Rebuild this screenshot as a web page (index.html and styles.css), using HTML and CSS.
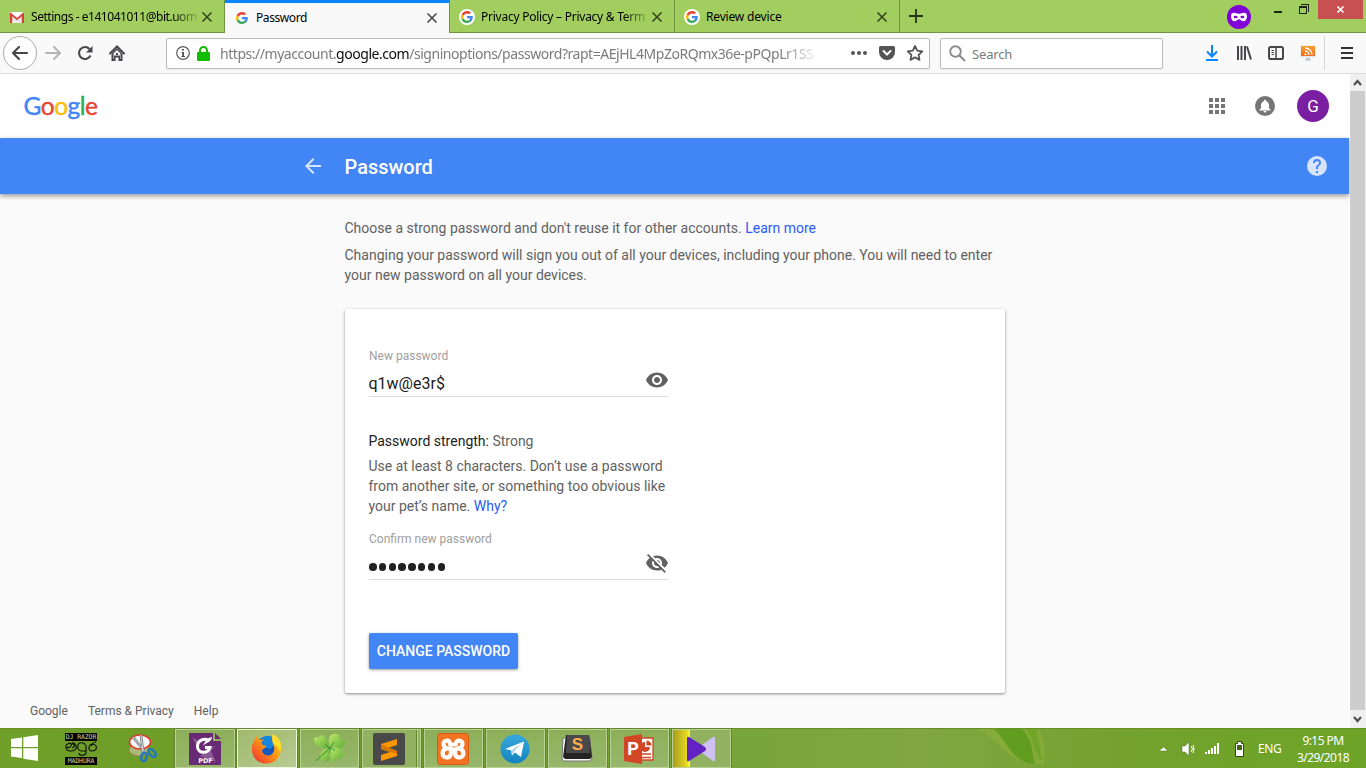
FILE: index.html
```html
<!DOCTYPE html>
<html lang="en">
<head>
<meta charset="utf-8">
<title>Password</title>
<link rel="stylesheet" href="styles.css">
</head>
<body>
<svg width="0" height="0" class="defs">
  <defs>
    <symbol id="g" viewBox="0 0 48 48">
      <path fill="#ea4335" d="M24 9.500c3.500 0 6.700 1.200 9.200 3.600l6.900-6.900C35.900 2.400 30.500 0 24 0 14.600 0 6.500 5.400 2.600 13.200l8 6.200C12.400 13.700 17.700 9.500 24 9.500z"/>
      <path fill="#4285f4" d="M47 24.500c0-1.600-.2-3.100-.4-4.500H24v9h12.900c-.6 3-2.300 5.500-4.800 7.200l7.700 6C44.400 38 47 31.800 47 24.500z"/>
      <path fill="#fbbc05" d="M10.500 28.600a14.400 14.400 0 0 1 0-9.200l-8-6.200a24 24 0 0 0 0 21.600l8-6.200z"/>
      <path fill="#34a853" d="M24 48c6.500 0 11.900-2.100 15.900-5.800l-7.700-6c-2.200 1.400-4.900 2.300-8.200 2.300-6.300 0-11.600-4.200-13.500-9.900l-8 6.200C6.500 42.600 14.600 48 24 48z"/>
    </symbol>
    <symbol id="x" viewBox="0 0 12 12"><path d="M1.500 1.500l9 9M10.500 1.500l-9 9" stroke="currentColor" stroke-width="1.500" fill="none"/></symbol>
    <linearGradient id="or" x2="0" y2="1"><stop stop-color="#f5a02c"/><stop offset="1" stop-color="#f36c1c"/></linearGradient>
    <linearGradient id="ff" x1="1" x2="0" y2="1"><stop stop-color="#ffd827"/><stop offset=".45" stop-color="#ff9a12"/><stop offset="1" stop-color="#ed2638"/></linearGradient>
    <linearGradient id="leaf" x2="1" y2="1"><stop stop-color="#c0e86c"/><stop offset="1" stop-color="#5cad36"/></linearGradient>
    <linearGradient id="tg" x2="0" y2="1"><stop stop-color="#35a9de"/><stop offset="1" stop-color="#1583bd"/></linearGradient>
  </defs>
</svg>

<header class="tabs">
  <div class="tab">
    <svg class="fav" viewBox="0 0 16 16"><path d="M1 3h14v11H1z" fill="#e9e9e9"/><path d="M2.500 3L8 8l5.500-5z" fill="#fff"/><path d="M1 14V3.200L8 9l7-5.800V14h-2.200V7.300L8 11.300 3.200 7.300V14z" fill="#d93f35"/></svg>
    <span class="tab-title t1">Settings - e141041011@bit.uom</span>
    <svg class="close"><use href="#x"/></svg>
  </div>
  <div class="tab active">
    <span class="fav"><svg><use href="#g"/></svg></span>
    <span class="tab-title t2">Password</span>
    <svg class="close"><use href="#x"/></svg>
  </div>
  <div class="tab">
    <span class="fav round"><svg><use href="#g"/></svg></span>
    <span class="tab-title t3">Privacy Policy – Privacy &amp; Term</span>
    <svg class="close"><use href="#x"/></svg>
  </div>
  <div class="tab">
    <span class="fav round"><svg><use href="#g"/></svg></span>
    <span class="tab-title t4">Review device</span>
    <svg class="close"><use href="#x"/></svg>
  </div>
  <svg class="plus" viewBox="0 0 14 14"><path d="M7 0v14M0 7h14" stroke="#263016" stroke-width="1.800"/></svg>
  <svg class="mask" viewBox="0 0 24 24"><circle cx="12" cy="12" r="12" fill="#8000d7"/><path fill="#fff" d="M4 11c0-3 2-3.400 4-3.100 2 .2 3 .9 4 .9s2-.7 4-.9c2-.3 4 .1 4 3.100 0 3.400-1.500 5.300-3.600 5.300-2 0-2.900-2-4.400-2s-2.400 2-4.400 2C5.500 16.300 4 14.400 4 11z"/><ellipse cx="8.600" cy="12" rx="2" ry="1.200" fill="#8000d7"/><ellipse cx="15.400" cy="12" rx="2" ry="1.200" fill="#8000d7"/></svg>
  <div class="window">
    <svg width="90" height="19" viewBox="0 0 90 19" shape-rendering="crispEdges"><path d="M1 11h8v2H1z" fill="#1c2511"/><path d="M26.500 6.500h7v7h-7zM28 4.500h7.500V12" fill="none" stroke="#1c2511"/><path d="M26 6h8v2h-8z" fill="#1c2511"/><path d="M45 0h45v19H45z" fill="#c75050"/><path d="M64.500 6.500l6 6M70.500 6.500l-6 6" stroke="#fff" stroke-width="1.700" shape-rendering="auto"/></svg>
  </div>
</header>

<nav class="toolbar">
  <span class="back"><svg width="18" height="16" viewBox="0 0 18 16" fill="none" stroke="#47474a" stroke-width="2.200" stroke-linecap="round" stroke-linejoin="round"><path d="M8 2L2 8l6 6M2 8h14"/></svg></span>
  <span class="tool"><svg width="18" height="16" viewBox="0 0 18 16" fill="none" stroke="#b4b4b4" stroke-width="2" stroke-linecap="round" stroke-linejoin="round"><path d="M10 2l6 6-6 6M16 8H2"/></svg></span>
  <span class="tool"><svg width="16" height="16" viewBox="0 0 16 16"><path d="M13.500 10.500A6 6 0 1 1 12.500 4" fill="none" stroke="#47474a" stroke-width="2.100"/><path d="M15.500 1v6.500H9z" fill="#47474a"/></svg></span>
  <span class="tool"><svg width="16" height="16" viewBox="0 0 16 16"><path d="M1 8.500l7-7 7 7" fill="none" stroke="#47474a" stroke-width="2" stroke-linecap="round"/><path fill="#47474a" fill-rule="evenodd" d="M2.500 8.500L8 3l5.500 5.500V16H9.500v-3.500h-3V16h-4zM4.500 8.500V14H5v-3.500h6V14h.5V8.500L8 5z"/><path d="M7 8h2v2H7z" fill="#47474a"/></svg></span>
  <div class="url">
    <svg width="14" height="14" viewBox="0 0 14 14"><circle cx="7" cy="7" r="6.300" fill="none" stroke="#5c5c5c" stroke-width="1.200"/><path d="M6 3h2v1.600H6zM5.500 6H8v4h1v1H5.500v-1h.8V7h-.8z" fill="#4c4c4c"/></svg>
    <svg class="lock" width="13" height="15" viewBox="0 0 13 15"><path d="M3 7V4.500a3.500 3.500 0 0 1 7 0V7" fill="none" stroke="#12bc00" stroke-width="2"/><rect y="6" width="13" height="9" rx="1.300" fill="#12bc00"/></svg>
    <span class="address">https://myaccount.<b>google.com</b>/signinoptions/password?rapt=AEjHL4MpZoRQmx36e-pPQpLr1SS</span>
    <svg class="url-icons" width="74" height="18" viewBox="0 0 74 18"><g fill="#555"><circle cx="3" cy="9" r="2"/><circle cx="9" cy="9" r="2"/><circle cx="15" cy="9" r="2"/><path d="M30.500 2h13q1.500 0 1.500 1.500V8a8 8 0 0 1-16 0V3.500Q29 2 30.500 2z"/></g><path d="M33.500 7l3.500 3.500L40.500 7" fill="none" stroke="#fff" stroke-width="2" stroke-linecap="round"/><path d="M65 2l2.200 4.600 5.100.7-3.700 3.500.9 5.100-4.500-2.500-4.500 2.500.9-5.100-3.700-3.500 5.100-.7z" fill="none" stroke="#555" stroke-width="1.800" stroke-linejoin="round"/></svg>
  </div>
  <div class="search"><svg width="17" height="17" viewBox="0 0 17 17" fill="none" stroke="#8a8a8a" stroke-width="1.900"><circle cx="6.500" cy="6.500" r="5.300"/><path d="M10.500 10.500l5.500 5.500"/></svg><span>Search</span></div>
  <div class="actions">
    <span><svg width="14" height="16" viewBox="0 0 14 16" fill="none" stroke="#0a84ff" stroke-width="2"><path d="M7 0v11M2 6.500L7 11.500l5-5M1 15h12"/></svg></span>
    <span><svg width="16" height="14" viewBox="0 0 16 14" fill="none" stroke="#47474a" stroke-width="2"><path d="M2 0v14M5.500 0v14M9 0v14M11 .5l4 13"/></svg></span>
    <span><svg width="16" height="14" viewBox="0 0 16 14" fill="none" stroke="#47474a" stroke-width="2"><rect x="1" y="1" width="14" height="12" rx="1.800"/><path d="M8 1v12" stroke-width="1.500"/><path d="M3.500 4.500H6M3.500 6.500H6M3.500 8.500H6" stroke-width="1"/></svg></span>
    <span><svg width="16" height="16" viewBox="0 0 16 16"><rect x=".5" y=".5" width="15" height="12" rx="1" fill="#e5e5e5"/><path d="M1 1h14v10H1z" fill="url(#or)"/><g fill="none" stroke="#fff" stroke-width="1.300"><path d="M5 6a4 4 0 0 1 4 4M5 3a7 7 0 0 1 7 7"/></g><circle cx="5.500" cy="9.200" r="1" fill="#fff"/><path d="M6 13h4l1 2.500H5z" fill="#bfc6cc"/></svg></span>
  </div>
  <span class="menu"><svg width="12" height="12" viewBox="0 0 12 12" stroke="#333" stroke-width="2"><path d="M0 1h12M0 6h12M0 11h12"/></svg></span>
</nav>

<main class="viewport">
  <section class="page">
    <div class="masthead">
      <div class="logo"><span class="c-b">G</span><span class="c-r">o</span><span class="c-y">o</span><span class="c-b">g</span><span class="c-g">l</span><span class="c-r">e</span></div>
      <svg class="apps" width="16" height="16" viewBox="0 0 16 16" fill="#757575"><path d="M0 0h4v4H0zM6 0h4v4H6zM12 0h4v4h-4zM0 6h4v4H0zM6 6h4v4H6zM12 6h4v4h-4zM0 12h4v4H0zM6 12h4v4H6zM12 12h4v4h-4z"/></svg>
      <svg class="bell" width="20" height="20" viewBox="0 0 20 20"><circle cx="10" cy="10" r="10" fill="#757575"/><path fill="#fff" d="M10 3.700c.7 0 1.100.5 1.100 1.100v.4c1.900.5 2.900 2.100 2.900 4v3l1.500 1.400v.8h-11v-.8L6 12.200v-3c0-1.900 1-3.500 2.900-4v-.4c0-.6.400-1.100 1.100-1.100zM8.600 15h2.800c0 .9-.6 1.500-1.400 1.500S8.600 15.900 8.600 15z"/></svg>
      <span class="avatar">G</span>
    </div>
    <div class="titlebar">
      <svg class="arrow" width="16" height="16" viewBox="0 0 16 16"><path d="M16 7H3.800l5.600-5.600L8 0 0 8l8 8 1.400-1.400L3.800 9H16z" fill="#d7e5fd"/></svg>
      <h1>Password</h1>
      <svg class="help" width="20" height="20" viewBox="0 0 20 20"><circle cx="10" cy="10" r="10" fill="#d6e4fd"/><path d="M9 15h2v2H9zM10 3a4 4 0 0 0-4 4h2a2 2 0 1 1 4 0c0 2-3 1.800-3 5v1h2v-1c0-2.200 3-2.500 3-5a4 4 0 0 0-4-4z" fill="#4285f4"/></svg>
    </div>
    <div class="intro">
      <p>Choose a strong password and don't reuse it for other accounts. <a>Learn more</a></p>
      <p>Changing your password will sign you out of all your devices, including your phone. You will need to enter<br>your new password on all your devices.</p>
    </div>
    <div class="card">
      <div class="label">New password</div>
      <div class="field"><span>q1w@e3r$</span><svg width="24" height="24" viewBox="0 0 24 24" fill="#616161"><path d="M12 4.500C7 4.500 2.730 7.610 1 12c1.730 4.390 6 7.500 11 7.500s9.270-3.110 11-7.500c-1.730-4.390-6-7.500-11-7.500zM12 17c-2.760 0-5-2.240-5-5s2.240-5 5-5 5 2.240 5 5-2.240 5-5 5zm0-8c-1.660 0-3 1.340-3 3s1.340 3 3 3 3-1.340 3-3-1.340-3-3-3z"/></svg></div>
      <div class="strength">Password strength: <span>Strong</span></div>
      <p class="tip">Use at least 8 characters. Don’t use a password<br>from another site, or something too obvious like<br>your pet’s name. <a>Why?</a></p>
      <div class="label">Confirm new password</div>
      <div class="field"><span class="dots"><i></i><i></i><i></i><i></i><i></i><i></i><i></i><i></i></span><svg width="24" height="24" viewBox="0 0 24 24" fill="#616161"><path d="M12 7c2.760 0 5 2.240 5 5 0 .65-.13 1.260-.36 1.830l2.920 2.920c1.510-1.260 2.700-2.890 3.430-4.750-1.730-4.390-6-7.500-11-7.500-1.400 0-2.740.25-3.980.7l2.160 2.160C10.740 7.130 11.350 7 12 7zM2 4.270l2.740 2.740C3.080 8.300 1.780 10.020 1 12c1.730 4.390 6 7.500 11 7.500 1.550 0 3.030-.3 4.380-.84L19.730 22 21 20.730 3.270 3 2 4.270zM7.530 9.800l1.550 1.550c-.05.21-.08.430-.08.650 0 1.660 1.340 3 3 3 .22 0 .44-.03.65-.08l1.550 1.550c-.67.33-1.410.53-2.200.53-2.760 0-5-2.240-5-5 0-.79.2-1.530.53-2.200zm4.310-.78l3.150 3.150.02-.16c0-1.660-1.340-3-3-3l-.17.01z"/></svg></div>
      <div class="button">CHANGE PASSWORD</div>
    </div>
    <footer class="links"><span>Google</span><span>Terms &amp; Privacy</span><span>Help</span></footer>
  </section>
  <aside class="scroll">
    <svg width="15" height="17" viewBox="0 0 15 17"><path d="M4 11l3.500-4L11 11" fill="none" stroke="#505050" stroke-width="2.200"/></svg>
    <div class="thumb"></div>
    <svg width="15" height="18" viewBox="0 0 15 18"><path d="M4 7l3.500 4L11 7" fill="none" stroke="#505050" stroke-width="2.200"/></svg>
  </aside>
</main>

<footer class="taskbar">
  <svg class="start" width="27" height="26" viewBox="0 0 27 26" fill="#fff"><path d="M0 4l11-1.600V12H0zM12.300 2.200L27 0v12H12.300zM0 13.300h11V23L0 21.500zM12.300 13.300H27V26l-14.700-2.300z"/></svg>
  <div class="dj"><span>DJ RAZOR</span>
    <svg width="32" height="16" viewBox="0 0 32 16" fill="none" stroke="#111" stroke-width="1.200"><path d="M3 3C0 3 0 10 5 10c5 0 7-2 6-5S8 1 7 3M3 3c2-2 4 0 3 2S3 7 2 6M7 3c3 0 3 4 0 4M13 4c0-3 7-3 7 0M13 4c-1 4 1 6 4 6h4V4M21 10v2c-1 3-7 3-7 0M31 1c-3 0-3 2-6 3-2 3-1 6 2 6 4 0 5-3 4-5s-4-2-5 0"/></svg>
    <span>MADHURA</span></div>
  <svg class="snip" width="32" height="34" viewBox="0 0 32 34"><ellipse cx="12" cy="18" rx="10" ry="6" fill="#a9b978" stroke="#b46c56" stroke-width=".7"/><ellipse cx="13" cy="10" rx="10.500" ry="7" fill="#f5f5f5" stroke="#e0392b" stroke-width="1.500"/><path d="M6 5l12 15M14 3l2 17" stroke="#727b82" stroke-width="2.600"/><path d="M6 5l12 15M14 3l2 17" stroke="#d9dfe3" stroke-width="1"/><g fill="none" stroke="#2377bb" stroke-width="2.500"><ellipse cx="17" cy="25" rx="2.700" ry="4.300" transform="rotate(8 17 25)"/><ellipse cx="25" cy="21" rx="2.800" ry="4.600" transform="rotate(-45 25 21)"/></g></svg>
  <div class="task pdf"><svg width="32" height="32" viewBox="0 0 32 32"><path d="M0 0h24v8h8v24H0z" fill="#682a73"/><path d="M26 0l6 6h-6z" fill="#682a73"/><path d="M3 4l8 5-3 4zM27 12l-5 6 5 11-16-6z" fill="#8b5896"/><path d="M20.500 7.500C16 4.500 8.500 7 8.500 13.500c0 7 10 8 12.500 1H16" fill="none" stroke="#fff" stroke-width="3"/><path d="M23 4c-1 6-6 5-9 9 2-5 4-8 9-9z" fill="#fff"/><text x="16.500" y="30" text-anchor="middle" class="pdf-text">PDF</text></svg></div>
  <div class="task on"><svg width="32" height="32" viewBox="0 0 32 32"><circle cx="16.500" cy="16" r="12.500" fill="#1557bd"/><path d="M11 5c3-3 9-3 11 0 1 5 1 9-3 11-4-1-8-2-7-6z" fill="#1687dc"/><path d="M22 1c8 5 10 13 7 20-3 8-11 11-18 9C3 28 0 20 1 13 2 9 4 7 5 3c2 1 2 3 3 4l5-1c-2 2-3 4-1 6l3 1c0 3-4 2-4 5 2 6 10 6 12 0 2-5-4-8-1-17z" fill="url(#ff)"/><path d="M22 1c8 5 10 12 7 18-1-5-4-6-6-8-2-3-2-6-1-10z" fill="#ffdf2c"/></svg></div>
  <div class="task"><svg width="33" height="32" viewBox="0 0 33 32"><g fill="url(#leaf)"><path d="M17 15C11 16 3 14 1 8c-1-4 3-5 5-3 0-5 7-4 11 10z"/><path d="M17 15C14 6 17 1 21 1c5-1 7 3 5 6 5-2 7 2 5 5-2 4-8 4-14 3z"/><path d="M17 15c8-2 14 2 13 7 0 4-4 4-6 2 2 6-9 9-7-9z"/><path d="M17 15c-5 0-9 3-10 8 0 4 3 5 5 3 0 4 4 3 4 1 2-3 1-9 1-12z"/></g><path d="M17 15C12 19 7 24 3 28" stroke="#58a53a" fill="none" stroke-width="1.500"/><path d="M17 15l-5-3.500M17 15l4-6M17 15l5 2M17 15v5" stroke="#318c3a" fill="none" stroke-width=".9"/></svg></div>
  <div class="task stacked"><svg width="32" height="32" viewBox="0 0 32 32"><rect width="32" height="32" rx="2" fill="#494949"/><path d="M8 11l16-5v6l-9 3 9 3v5L8 28v-6l9-3-9-3z" fill="#ff9800"/><path d="M8 11v5l16 5v-3z" fill="#d97800"/></svg></div>
  <div class="task"><svg width="32" height="32" viewBox="0 0 32 32"><rect x=".5" y=".5" width="31" height="31" rx="3" fill="#f27322" stroke="#d95a16"/><g fill="none" stroke="#fff" stroke-width="4.200" stroke-linecap="round" stroke-linejoin="round"><path d="M13 10.500C12 6 6 7.500 6.500 11c.3 2.500 2 4 3.500 4.500-6 1-5.500 9-.5 9 4.500 0 4.500-3 4.500-8h4c0 5 0 8 4.500 8 5 0 5.500-8-.5-9 1.500-.5 3.200-2 3.500-4.500.5-3.500-5.500-5-6.500-.5M13 11.500h6M10 15.500h4M18 16.500l3-1"/></g></svg></div>
  <div class="task"><svg width="30" height="30" viewBox="0 0 30 30"><circle cx="15" cy="15" r="14.500" fill="url(#tg)"/><path d="M5 15L24 7.500 21 23l-6-4.500-3 3-.8-5.200z" fill="#fff"/><path d="M11 16.500l10-7-7 8.500-2 3.500z" fill="#b8d4e5"/></svg></div>
  <div class="task"><svg width="34" height="32" viewBox="0 0 34 32"><path d="M3 5h27l2 20-2 3H3L2 25z" fill="#f7f7f7" stroke="#777"/><path d="M6 2h23l3 22-2 2H5l-2-2z" fill="#242424"/><path d="M7 2h22l1 18H6z" fill="#4a4a4a"/><text x="17.500" y="17" text-anchor="middle" class="s-text">S</text></svg></div>
  <div class="task"><svg width="32" height="32" viewBox="0 0 32 32"><path d="M17 5h13v22H17z" fill="#fff" stroke="#d14524" stroke-width="1.300"/><path d="M22 9a5 5 0 1 0 5 5h-5zM23.500 7.500v5h5a5 5 0 0 0-5-5z" fill="#d14524"/><path d="M19 21h9M19 24.500h9" stroke="#d14524" stroke-width="1.500"/><path d="M1 4l18-3v30L1 28z" fill="#d24625"/><text x="10" y="22" text-anchor="middle" class="p-text">P</text></svg></div>
  <div class="task player"><svg width="28" height="26" viewBox="0 0 28 26"><path d="M28 2q0-2-2-1L11 12v2l15 11q2 1 2-1z" fill="#d0c1f3"/><path d="M0 2Q0 0 2 1l16 10q2 2 0 4L2 25q-2 1-2-1z" fill="#6323c4"/></svg></div>
  <svg class="wallpaper" width="110" height="40" viewBox="0 0 110 40"><path d="M0 0h60c8 10 7 24 6 36-7-1-11 0-18-2C30 30 20 10 0 0z" fill="#8fb13a" opacity=".5"/><path d="M16 0h28c12 12 10 27 13 35C35 35 31 14 16 0z" fill="#579a18" opacity=".8"/><path d="M48 0h11c1 12 5 26 4 32C57 24 54 8 48 0z" fill="#65a01c" opacity=".6"/></svg>
  <svg class="tray" width="86" height="18" viewBox="0 0 86 18"><path d="M0 11l4.500-4L9 11z" fill="#fff" stroke="#557b20" stroke-width=".5"/><g fill="#fff"><path d="M23 6h3l4-4v14l-4-4h-3z" stroke="#456916" stroke-width=".5"/><path d="M32 6q3 3 0 6M34 5q2 4 0 8" fill="none" stroke="#fff" stroke-width="1"/><path d="M46 12h2v2h-2zM49 10h2v4h-2zM52 8h2v6h-2zM55 6h2v8h-2zM58 3h2v11h-2z"/></g><path d="M76.500 3.500h2v-2h4v2h2v13h-8z" fill="#fff" stroke="#304a12"/><path d="M78 5h5v5h-5z" fill="#426318"/></svg>
  <span class="lang">ENG</span>
  <div class="clock"><span>9:15 PM</span><span>3/29/2018</span></div>
</footer>
</body>
</html>
```
FILE: styles.css
```css
* { box-sizing: border-box; }
body { margin: 0; width: 1366px; height: 768px; overflow: hidden; display: flex; flex-direction: column; font-family: Roboto, sans-serif; background: #fafafa; }
svg { display: block; flex: none; }
.defs { position: absolute; }

.tabs { height: 33px; flex: none; display: flex; background: #a1ce5f; font: 12px/18px "Noto Sans", sans-serif; border-bottom: 1px solid #71923f; }
.tab { width: 225px; height: 32px; flex: none; display: flex; align-items: center; padding: 2px 11px 0 9px; border-right: 1px solid #71923f; color: #000; }
.tab.active { height: 33px; background: #f9f9fa; border-top: 3px solid #0a84ff; padding: 0 10px 1px 9px; }
.fav { width: 16px; height: 16px; display: grid; place-items: center; flex: none; }
.fav svg { width: 12px; height: 12px; }
.round { background: #fff; border-radius: 50%; }
.tab-title { width: 167px; flex: none; margin: 0 3px 0 6px; white-space: nowrap; }
.t1 { letter-spacing: -.46px; }
.t2 { letter-spacing: -.42px; }
.t3 { letter-spacing: -.25px; }
.t4 { letter-spacing: -.18px; }
.t1, .t3 { -webkit-mask-image: linear-gradient(90deg, #000 142px, transparent 170px); mask-image: linear-gradient(90deg, #000 142px, transparent 170px); }
.close { width: 12px; height: 12px; color: #304019; }
.active .close { color: #444; }
.plus { width: 14px; height: 14px; margin: 9px 0 0 9px; }
.mask { width: 24px; height: 24px; margin: 5px 0 0 304px; }
.window { margin-left: 22px; }

.toolbar { height: 41px; flex: none; display: flex; align-items: center; background: #f9f9fa; border-bottom: 1px solid #dcdcdc; padding-left: 3px; font: 14px/20px "Noto Sans", sans-serif; color: #7b7b7b; }
.back { width: 34px; height: 34px; border: 1px solid #adadad; border-radius: 50%; background: #fff; display: grid; place-items: center; flex: none; }
.tool { width: 32px; height: 32px; display: grid; place-items: center; flex: none; }
.url, .search { height: 31px; flex: none; display: flex; align-items: center; background: #fff; border: 1px solid #bdbdbd; border-radius: 2px; box-shadow: 0 1px 2px #0001; }
.url { width: 764px; margin-left: 33px; padding-left: 9px; }
.lock { margin-left: 7px; }
.address { width: 602px; flex: none; margin-left: 10px; padding-top: 2px; white-space: nowrap; letter-spacing: -.46px; -webkit-mask-image: linear-gradient(90deg, #000 560px, transparent 600px); mask-image: linear-gradient(90deg, #000 560px, transparent 600px); }
.address b { font-weight: 400; color: #0c0c0d; }
.url-icons { margin-left: 28px; }
.search { width: 223px; margin-left: 10px; padding-left: 8px; gap: 6px; font-size: 13px; }
.search span { padding-top: 2px; letter-spacing: -.15px; }
.actions { display: flex; margin-left: 33px; }
.actions span { width: 32px; height: 32px; display: grid; place-items: center; }
.menu { height: 34px; border-left: 1px solid #d7d7d7; padding-left: 16px; display: flex; align-items: center; }

.viewport { height: 654px; flex: none; display: flex; }
.page { width: 1350px; display: flex; flex-direction: column; background: #fafafa; border-right: 1px solid #fff; }
.masthead { height: 64px; flex: none; display: flex; align-items: center; background: #fff; padding: 0 20px 0 23px; }
.logo { font: 24.5px/32px Lato, sans-serif; letter-spacing: -.5px; margin: 0 auto 1px .5px; -webkit-text-stroke: .4px; }
.c-b { color: #4285f4; } .c-r { color: #ea4335; } .c-y { color: #fbbc05; } .c-g { color: #34a853; }
.bell { margin: 0 22px 0 30px; }
.avatar { width: 32px; height: 32px; border-radius: 50%; background: #7b1fa2; color: #fff; font-size: 17px; line-height: 32px; text-align: center; }
.titlebar { height: 56px; flex: none; display: flex; align-items: center; background: #4285f4; padding: 0 22px 0 304.500px; box-shadow: 0 2px 5px rgba(0,0,0,.4); }
h1 { margin: 2px auto 0 24px; font-size: 20px; line-height: 28px; font-weight: 500; color: #fff; }
.intro { padding: 24px 0 0 344.500px; font-size: 14px; line-height: 20px; color: #616161; white-space: nowrap; letter-spacing: -.005px; }
.intro p { margin: 0 0 7px; }
a { color: #2a5bfa; }
.card { width: 660px; height: 384px; flex: none; margin: 17px 0 0 345px; padding: 39px 24px 0 23.500px; background: #fff; border-radius: 2px; box-shadow: 0 1px 3px rgba(0,0,0,.45); font-size: 14px; line-height: 20px; color: #616161; }
.label { padding-left: .5px; font-size: 12px; line-height: 16px; color: #9e9e9e; }
.field { width: 300px; height: 33px; display: flex; align-items: center; justify-content: space-between; border-bottom: 1px solid #dedede; font-size: 16px; color: #212121; }
.field > span { padding-top: 7px; }
.dots { display: flex; gap: 2.300px; padding-left: .5px; }
.field > .dots { padding-top: 8px; }
.dots i { width: 7.500px; height: 7.500px; border-radius: 50%; background: #212121; }
.strength { margin-top: 34px; color: #212121; }
.strength span { color: #616161; }
.tip { margin: 5px 0 15px; white-space: nowrap; }
.button { width: 149px; height: 36px; margin: 53px 0 0 .5px; border-radius: 2px; background: #4285f4; color: #fff; font-weight: 500; line-height: 37px; text-align: center; white-space: nowrap; box-shadow: 0 1px 3px rgba(0,0,0,.4); }
.links { display: flex; gap: 20px; padding: 10px 0 0 30px; font-size: 12px; line-height: 16px; color: #616161; }
.scroll { width: 16px; display: flex; flex-direction: column; background: #f0f0f0; }
.thumb { width: 15px; flex: 1; background: #cdcdcd; }

.taskbar { height: 40px; flex: none; display: flex; align-items: center; padding-left: 11px; background: linear-gradient(90deg, #71a02a, #6c9d26 20%, #75a536 50%, #80a742 67%, #73a12d 83%, #6da427); border-top: 1px solid #688f27; color: #fff; font-family: "Noto Sans", sans-serif; }
.start { margin-bottom: 2px; }
.dj { width: 32px; margin-left: 27px; }
.dj span { display: block; height: 8px; background: #000; color: #c5d6a8; font: 6.500px/8px "DejaVu Sans Mono", monospace; text-align: center; white-space: nowrap; letter-spacing: -.1px; }
.snip { margin: 0 16px 0 30px; }
.task { width: 59px; height: 39px; margin-right: 3px; flex: none; display: grid; place-items: center; background: linear-gradient(#8dae58, #97b86b); border: 1px solid #bad094; outline: 1px solid #65852c; }
.task svg { margin-right: 1px; }
.pdf { width: 60px; margin-right: 2px; }
.on { width: 60px; background: linear-gradient(150deg, #9fb96b, #b8cb93); border-color: #eff6df; }
.stacked { padding-right: 5px; background: linear-gradient(90deg, transparent 53px, #65852c 53px, #65852c 54px, #bad094 54px, #bad094 55px, transparent 55px), #92b261; }
.player { background: linear-gradient(90deg, #aa9b1e, #e5db22 14px, #ffff38 17px, #92b261 17px); }
.pdf-text { font: bold 6.500px "DejaVu Sans", sans-serif; fill: #fff; }
.s-text { font: bold 17px "Liberation Sans", sans-serif; fill: #ffad4d; }
.p-text { font: bold 18px Roboto, sans-serif; fill: #fff; }
.wallpaper { margin-left: 244px; }
.tray { margin-left: 71px; margin-right: 13px; }
.lang { width: 27px; font-size: 12px; letter-spacing: -.45px; }
.clock { width: 84px; margin-left: -4px; display: flex; flex-direction: column; align-items: center; font-size: 12px; line-height: 17px; letter-spacing: -.55px; }
```
